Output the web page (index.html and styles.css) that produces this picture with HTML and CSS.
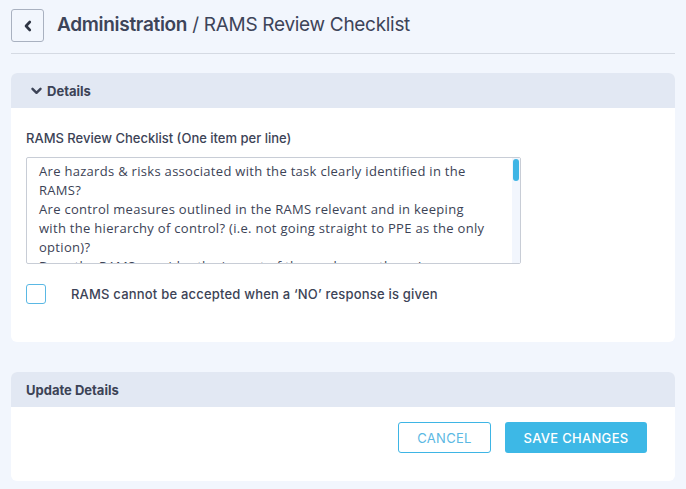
FILE: index.html
```html
<!DOCTYPE html>
<html lang="en">
  <head>
    <meta charset="UTF-8" />
    <meta name="viewport" content="width=device-width, initial-scale=1.0" />
    <title>RAMS Review Checklist</title>
    <link rel="stylesheet" href="styles.css">
  </head>
  <body>
    <div class="page">
      <div class="page-header">
        <button class="back-btn" type="button">
          <svg width="10" height="12" viewBox="0 0 10 12"><path d="M6.8 2 L3 6 L6.8 10" fill="none" stroke="#2f3544" stroke-width="2.6" stroke-linecap="round" stroke-linejoin="round"/></svg>
        </button>
        <h1 class="title"><strong>Administration</strong> / RAMS Review Checklist</h1>
      </div>

      <div class="card">
        <div class="card-head">
          <svg class="chev" width="11" height="8" viewBox="0 0 11 8"><path d="M1.5 1.8 L5.5 5.8 L9.5 1.8" fill="none" stroke="#3c4356" stroke-width="2.4" stroke-linecap="round" stroke-linejoin="round"/></svg>
          Details
        </div>
        <div class="card-body">
          <label class="field-label" for="checklist">RAMS Review Checklist (One item per line)</label>
          <div class="textarea-wrap">
            <textarea id="checklist" class="checklist">Are hazards &amp; risks associated with the task clearly identified in the RAMS?
Are control measures outlined in the RAMS relevant and in keeping with the hierarchy of control? (i.e. not going straight to PPE as the only option)?
Does the RAMS consider the impact of the works on others / neighbouring areas?
Is the sequence of works clearly described?
Are the persons responsible for supervision named?
Are emergency and first aid arrangements included?
Is the required PPE listed for each activity?
Are permits to work identified where required?
Have COSHH assessments been referenced?
Are plant and equipment requirements identified?
Are competence and training requirements stated?
Is there a method for communicating the RAMS to operatives?
Are welfare arrangements described?
Has the RAMS been signed and dated?</textarea>
            <div class="scroll-track"><div class="scroll-thumb"></div></div>
          </div>
          <label class="check-row">
            <input type="checkbox" class="check" />
            <span>RAMS cannot be accepted when a ‘NO’ response is given</span>
          </label>
        </div>
      </div>

      <div class="card card-update">
        <div class="card-head">Update Details</div>
        <div class="card-body actions">
          <button class="btn btn-outline" type="button">CANCEL</button>
          <button class="btn btn-primary" type="button">SAVE CHANGES</button>
        </div>
      </div>
    </div>
  </body>
</html>
```

FILE: styles.css
```css
html, body {
  margin: 0;
  background-color: #f2f6fd;
}
body {
  font-family: "Inter", "Open Sans", sans-serif;
  color: #3c4356;
  width: 686px;
  height: 489px;
  overflow: hidden;
}
.page {
  padding: 9px 11px 0 11px;
}
.page-header {
  display: flex;
  align-items: center;
  height: 33px;
  padding-bottom: 11px;
  border-bottom: 1px solid #d5dae3;
}
.back-btn {
  width: 33px;
  height: 33px;
  box-sizing: border-box;
  border: 1px solid #a9b1c0;
  border-radius: 3px;
  background: #f2f6fd;
  display: flex;
  align-items: center;
  justify-content: center;
  padding: 0;
}
.title {
  margin: -2px 0 0 13px;
  font-size: 19px;
  font-weight: 400;
  letter-spacing: -0.3px;
  color: #3d4459;
}
.title strong {
  font-weight: 600;
}
.card {
  margin-top: 19px;
  background: #fff;
  border-radius: 6px;
  overflow: hidden;
}
.card-head {
  background: #e2e8f3;
  height: 35px;
  display: flex;
  align-items: center;
  padding-left: 20px;
  font-size: 13px;
  font-weight: 700;
}
.chev {
  margin: 0 5px 0 0;
}
.card-body {
  padding: 22px 15px 0 15px;
  height: 234px;
  box-sizing: border-box;
}
.field-label {
  display: block;
  font-size: 13px;
  font-weight: 500;
}
.textarea-wrap {
  position: relative;
  width: 495px;
  margin-top: 11px;
}
.checklist {
  display: block;
  width: 495px;
  height: 107px;
  box-sizing: border-box;
  border: 1px solid #c8cdd6;
  border-radius: 2px;
  padding: 4px 31px 0 12px;
  font-family: "Open Sans", sans-serif;
  font-size: 13px;
  letter-spacing: 0.3px;
  line-height: 19px;
  color: #3c4356;
  overflow: hidden;
  resize: vertical;
}
.scroll-track {
  position: absolute;
  top: 1px;
  right: 1px;
  bottom: 1px;
  width: 8px;
  background: #f2f6fd;
  pointer-events: none;
}
.scroll-thumb {
  margin: 1px 0 0 1px;
  width: 6px;
  height: 22px;
  border-radius: 3px;
  background: #3eb5e5;
}
.check-row {
  display: flex;
  align-items: center;
  margin-top: 20px;
  font-size: 13px;
  font-weight: 500;
  letter-spacing: 0.2px;
}
.check {
  appearance: none;
  -webkit-appearance: none;
  width: 20px;
  height: 20px;
  margin: 0 25px 0 0;
  border: 1.5px solid #5ab8e4;
  border-radius: 3px;
  background: #fff;
}
.card-update {
  margin-top: 30px;
}
.card-update .card-head {
  padding-left: 15px;
}
.actions {
  display: flex;
  justify-content: flex-end;
  gap: 14px;
  height: 74px;
  padding: 15px 28px 0 0;
}
.btn {
  height: 31px;
  font-family: "Inter", sans-serif;
  font-size: 13px;
  letter-spacing: 0.3px;
  border-radius: 3px;
  box-sizing: border-box;
}
.btn-outline {
  width: 93px;
  border: 1px solid #3eb5e5;
  background: #fff;
  color: #5bb8e3;
}
.btn-primary {
  width: 142px;
  border: none;
  background: #3db8e6;
  color: #fff;
  font-weight: 500;
}
```
